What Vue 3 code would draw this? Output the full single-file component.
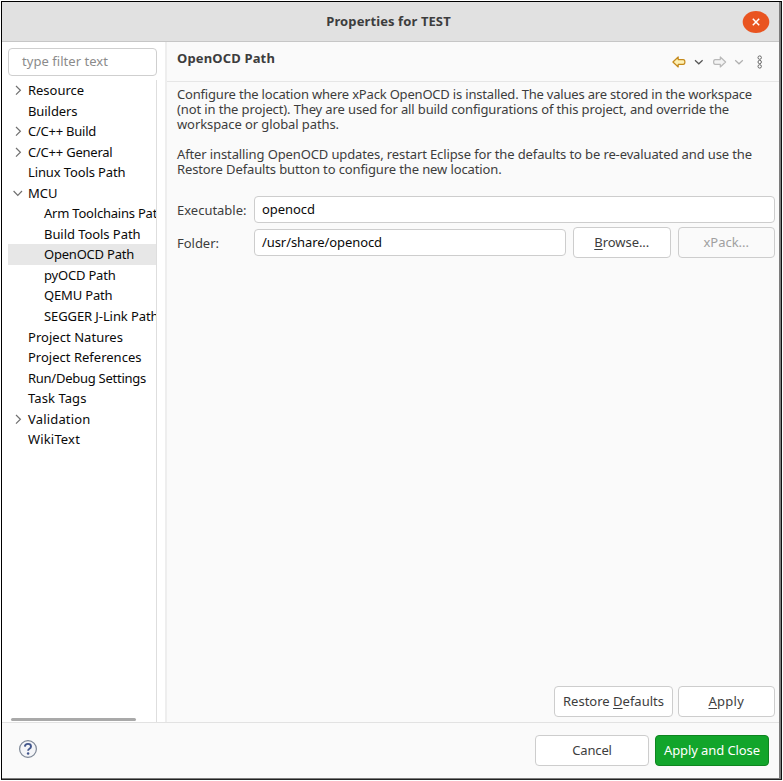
<script setup>
import { ref } from 'vue'

const tree = [
  { label: 'Resource', arrow: 'right', w: 56 },
  { label: 'Builders', w: 49.5 },
  { label: 'C/C++ Build', arrow: 'right', w: 68 },
  { label: 'C/C++ General', arrow: 'right', w: 84.5 },
  { label: 'Linux Tools Path', w: 97.5 },
  { label: 'MCU', arrow: 'down', w: 29.5 },
  { label: 'Arm Toolchains Path', child: true, w: 121 },
  { label: 'Build Tools Path', child: true, w: 96.5 },
  { label: 'OpenOCD Path', child: true, selected: true, w: 90 },
  { label: 'pyOCD Path', child: true, w: 71.5 },
  { label: 'QEMU Path', child: true, w: 68.5 },
  { label: 'SEGGER J-Link Path', child: true, w: 114.5 },
  { label: 'Project Natures', w: 95 },
  { label: 'Project References', w: 113.5 },
  { label: 'Run/Debug Settings', w: 118 },
  { label: 'Task Tags', w: 58.5 },
  { label: 'Validation', arrow: 'right', w: 62.5 },
  { label: 'WikiText', w: 52 },
]

const paragraphs = [
  [
    { text: 'Configure the location where xPack OpenOCD is installed. The values are stored in the workspace', w: 575 },
    { text: '(not in the project). They are used for all build configurations of this project, and override the', w: 552 },
    { text: 'workspace or global paths.', w: 162 },
  ],
  [
    { text: 'After installing OpenOCD updates, restart Eclipse for the defaults to be re-evaluated and use the', w: 575 },
    { text: 'Restore Defaults button to configure the new location.', w: 324.5 },
  ],
]

const executable = ref('openocd')
const folder = ref('/usr/share/openocd')

// Tracks a label so that it fills the given width in pixels.
const vFit = {
  mounted(el, { value }) {
    const natural = el.getBoundingClientRect().width
    el.style.letterSpacing = (value - natural) / el.textContent.length + 'px'
  },
}
</script>

<template>
  <div class="window">
    <header class="titlebar">
      <h1 v-fit="124.5" class="t">Properties for TEST</h1>
      <svg class="close" width="28" height="24" viewBox="0 0 28 24">
        <ellipse cx="14" cy="12" rx="13.3" ry="10.9" fill="#e95420" />
        <path d="M10.8 8.8l6.4 6.4M17.2 8.8l-6.4 6.4" stroke="#fff" stroke-width="1.5" />
      </svg>
    </header>

    <div class="body">
      <aside class="side">
        <div class="filter"><span v-fit="86" class="t">type filter text</span></div>
        <div class="tree">
          <div v-for="n in tree" :key="n.label" class="node" :class="{ child: n.child, selected: n.selected }">
            <svg v-if="n.arrow" class="twisty" width="12" height="12" viewBox="0 0 12 12">
              <path :d="n.arrow === 'right' ? 'M4 2L8.4 6.3L4 10.6' : 'M1.6 4L5.8 8.4L10 4'" />
            </svg>
            <span v-fit="n.w" class="t">{{ n.label }}</span>
          </div>
          <div class="scroll"></div>
        </div>
      </aside>

      <main class="page">
        <div class="heading">
          <h2 v-fit="98" class="t">OpenOCD Path</h2>
          <svg class="tools" width="100" height="16" viewBox="0 0 100 16">
            <path d="M2.9 8L8.2 3V5.6H13.2Q14.9 5.6 14.9 8Q14.9 10.4 13.2 10.4H8.2V13Z" fill="#fdf0b4" stroke="#c58a1c" stroke-width="1.2" stroke-linejoin="round" />
            <path d="M25 6.2L28.8 9.8L32.6 6.2" fill="none" stroke="#555" stroke-width="1.2" />
            <path d="M55.6 8L50.3 3V5.6H45.2Q43.6 5.6 43.6 8Q43.6 10.4 45.2 10.4H50.3V13Z" fill="#f3f3f3" stroke="#b9b9b9" stroke-width="1.2" stroke-linejoin="round" />
            <path d="M65.2 6.2L69 9.8L72.8 6.2" fill="none" stroke="#b0b0b0" stroke-width="1.2" />
            <g fill="#fff" stroke="#666" stroke-width="1">
              <circle cx="89.7" cy="3.6" r="1.7" />
              <circle cx="89.7" cy="8" r="1.7" />
              <circle cx="89.7" cy="12.4" r="1.7" />
            </g>
          </svg>
        </div>

        <div class="copy">
          <p v-for="(p, i) in paragraphs" :key="i">
            <span v-for="l in p" :key="l.text" class="line"><span v-fit="l.w" class="t">{{ l.text }}</span></span>
          </p>
        </div>

        <div class="form">
          <div class="row">
            <label><span v-fit="69.5" class="t">Executable:</span></label>
            <div class="input"><span v-fit="53" class="t">{{ executable }}</span></div>
          </div>
          <div class="row">
            <label><span v-fit="42" class="t">Folder:</span></label>
            <div class="input"><span v-fit="120" class="t">{{ folder }}</span></div>
            <button class="btn w97"><span v-fit="55" class="t"><u>B</u>rowse...</span></button>
            <button class="btn w97 disabled"><span v-fit="45.5" class="t">xPack...</span></button>
          </div>
        </div>

        <div class="actions">
          <button class="btn w119"><span v-fit="101" class="t">Restore <u>D</u>efaults</span></button>
          <button class="btn w97"><span v-fit="35.5" class="t"><u>A</u>pply</span></button>
        </div>
      </main>
    </div>

    <footer class="footer">
      <svg class="help" width="20" height="20" viewBox="0 0 20 20">
        <circle cx="10" cy="10" r="8.4" fill="#f4f5f8" stroke="#7d8796" stroke-width="1.2" />
        <path d="M6.9 7.6Q7 4.9 10 4.9Q13 4.9 13 7.4Q13 8.8 11.5 9.7Q10.1 10.5 10.1 11.8" fill="none" stroke="#43578c" stroke-width="1.9" />
        <circle cx="10.1" cy="14.4" r="1.25" fill="#43578c" />
      </svg>
      <button class="btn w114"><span v-fit="39.5" class="t">Cancel</span></button>
      <button class="btn w114 primary"><span v-fit="96" class="t">Apply and Close</span></button>
    </footer>
  </div>
</template>

<style>
body {
  margin: 0;
  background: #fff;
}
</style>

<style scoped>
* {
  box-sizing: border-box;
}
.window {
  width: 781px;
  height: 779px;
  margin: 1px 0 0 1px;
  display: flex;
  flex-direction: column;
  border: 1px solid #000;
  border-right-color: #111;
  border-bottom-color: #222;
  box-shadow: inset -2px -1px 0 #7c7c7c;
  background: #fafafa;
  font-family: "Noto Sans", sans-serif;
  font-size: 13px;
  color: #3d3d3d;
}
.t {
  display: inline-block;
  white-space: pre;
}
.titlebar {
  position: relative;
  height: 40px;
  margin-right: 2px;
  padding-right: 4px;
  display: flex;
  justify-content: center;
  background: #e1e1e1;
  border-bottom: 1px solid #c6c6c6;
}
h1,
h2 {
  margin: 0;
  font-size: 13px;
  font-weight: 700;
  line-height: 20px;
}
h1 {
  margin-top: 9px;
}
.close {
  position: absolute;
  right: 9px;
  top: 8px;
}
.body {
  flex: 1;
  min-height: 0;
  display: flex;
  margin-right: 2px;
}
.side {
  width: 165px;
  padding: 6px 8px 0 6px;
  display: flex;
  flex-direction: column;
  background: #fff;
  border-right: 2px solid #eee;
}
.filter {
  width: 149px;
  height: 28px;
  padding-left: 13px;
  line-height: 25px;
  border: 1px solid #cfcfcf;
  border-radius: 4px;
  color: #8b8b8b;
}
.tree {
  position: relative;
  flex: 1;
  margin-top: 4px;
  width: 149px;
  border-right: 1px solid #dedede;
  overflow: hidden;
  color: #0a0a0a;
}
.node {
  position: relative;
  height: 20.56px;
  line-height: 20.4px;
  padding-left: 20px;
  white-space: nowrap;
}
.node.child {
  padding-left: 36px;
}
.node.selected {
  background: #e7e7e7;
}
.twisty {
  position: absolute;
  left: 3.5px;
  top: 4px;
  fill: none;
  stroke: #707070;
  stroke-width: 1.2;
}
.scroll {
  position: absolute;
  left: 3px;
  bottom: 1px;
  width: 125px;
  height: 3px;
  border-radius: 2px;
  background: #a9a9a9;
}
.page {
  flex: 1;
  display: flex;
  flex-direction: column;
}
.heading {
  height: 40px;
  padding: 6px 9px 0 10px;
  display: flex;
  justify-content: space-between;
  border-bottom: 1px solid #e6e6e6;
}
.tools {
  margin-top: 6px;
}
.copy {
  padding: 5px 0 0 10px;
}
.copy p {
  margin: 0 0 15px;
}
.line {
  display: block;
  height: 15px;
  line-height: 15px;
}
.form {
  padding: 4px 4px 0 10px;
}
.row {
  display: flex;
  align-items: center;
  height: 27px;
  margin-bottom: 6px;
}
label {
  width: 77px;
}
.input {
  flex: 1;
  height: 27px;
  line-height: 25px;
  padding-left: 7px;
  border: 1px solid #cdcdcd;
  border-radius: 4px;
  background: #fff;
  color: #0a0a0a;
}
.btn {
  height: 31px;
  margin-left: 7px;
  padding: 0 0 1px;
  font: inherit;
  line-height: 20px;
  color: #3d3d3d;
  background: #fff;
  border: 1px solid #cdcdcd;
  border-radius: 4px;
}
.btn u {
  text-underline-offset: 2px;
}
.w97 {
  width: 97.5px;
}
.w114 {
  width: 114px;
}
.w119 {
  width: 119px;
}
.disabled {
  background: #fafafa;
  color: #a0a0a0;
}
.actions {
  display: flex;
  justify-content: flex-end;
  margin-top: auto;
  padding: 0 4px 5px 0;
}
.actions .btn + .btn {
  margin-left: 4.5px;
}
.footer {
  height: 57px;
  margin-right: 2px;
  padding: 12px 10px 0 16px;
  display: flex;
  align-items: flex-start;
  border-top: 1px solid #e2e2e2;
}
.help {
  margin: 4px auto 0 0;
}
.footer .primary {
  margin-left: 6px;
  background: #12a52b;
  border-color: #0e8420;
  color: #fff;
}
</style>
